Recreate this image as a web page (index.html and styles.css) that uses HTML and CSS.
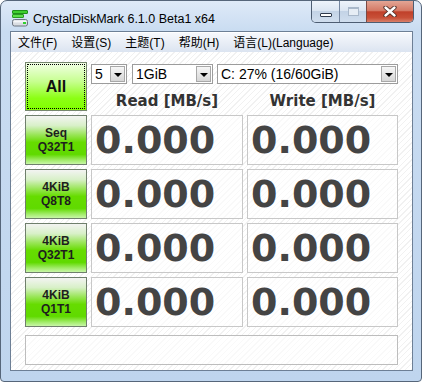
FILE: index.html
```html
<!DOCTYPE html>
<html>
<head>
<meta charset="utf-8">
<link rel="stylesheet" href="styles.css">
</head>
<body>
<div class="window">
  <div class="titlebar">
    <svg class="app-icon" width="16" height="17" viewBox="0 0 16 17">
      <rect x="0.5" y="0.5" width="15" height="3" rx="0.5" fill="#3fcf2f" stroke="#1f8f1a" stroke-width="1"/>
      <rect x="0.5" y="4.5" width="11" height="3" rx="0.5" fill="#5be04a" stroke="#2a9a22" stroke-width="1"/>
      <rect x="0.5" y="9.5" width="15" height="6.5" rx="2" fill="#d9dde2" stroke="#6b7480" stroke-width="1"/>
      <rect x="1.5" y="10.5" width="13" height="2" rx="1" fill="#f4f6f8"/>
      <rect x="11" y="12" width="3" height="2" fill="#2fd02f"/>
    </svg>
    <span class="title">CrystalDiskMark 6.1.0 Beta1 x64</span>
    <div class="caption">
      <div class="cbtn min"><span class="min-glyph"></span></div>
      <div class="cbtn max"><span class="max-glyph"></span></div>
      <div class="cbtn close">
        <svg width="14" height="11" viewBox="0 0 14 11">
          <path d="M2.5 1.5 L11.5 9.5 M11.5 1.5 L2.5 9.5" stroke="#4a2a24" stroke-width="4.2" stroke-linecap="round"/>
          <path d="M2.5 1.5 L11.5 9.5 M11.5 1.5 L2.5 9.5" stroke="#ffffff" stroke-width="2.4" stroke-linecap="round"/>
        </svg>
      </div>
    </div>
  </div>
  <div class="client">
    <div class="menubar">
      <span class="menu-item">文件(F)</span>
      <span class="menu-item">设置(S)</span>
      <span class="menu-item">主题(T)</span>
      <span class="menu-item">帮助(H)</span>
      <span class="menu-item">语言(L)(Language)</span>
    </div>
    <div class="content">
      <div class="grid">
        <div class="all-btn"><span class="focus">All</span></div>
        <div class="top-right">
          <div class="combos">
            <div class="combo w-count"><span class="combo-text">5</span><span class="drop"><span class="tri"></span></span></div>
            <div class="combo w-size"><span class="combo-text">1GiB</span><span class="drop"><span class="tri"></span></span></div>
            <div class="combo w-drive"><span class="combo-text">C: 27% (16/60GiB)</span><span class="drop"><span class="tri"></span></span></div>
          </div>
          <div class="headers">
            <div class="head read">Read [MB/s]</div>
            <div class="head write">Write [MB/s]</div>
          </div>
        </div>

        <div class="test-btn"><span>Seq</span><span>Q32T1</span></div>
        <div class="cell">0.000</div>
        <div class="cell">0.000</div>

        <div class="test-btn"><span>4KiB</span><span>Q8T8</span></div>
        <div class="cell">0.000</div>
        <div class="cell">0.000</div>

        <div class="test-btn"><span>4KiB</span><span>Q32T1</span></div>
        <div class="cell">0.000</div>
        <div class="cell">0.000</div>

        <div class="test-btn"><span>4KiB</span><span>Q1T1</span></div>
        <div class="cell">0.000</div>
        <div class="cell">0.000</div>
      </div>
      <div class="status"></div>
    </div>
  </div>
</div>
</body>
</html>
```

FILE: styles.css
```css
html, body {
  margin: 0;
  padding: 0;
  background: #ffffff;
}

.window {
  box-sizing: border-box;
  width: 422px;
  height: 382px;
  border: 1px solid #56667a;
  border-radius: 7px 7px 4px 4px;
  background: linear-gradient(180deg, #dfeaf8 0px, #c9dcf1 30px, #bfd5ee 100%);
  padding: 0 8px 10px 9px;
  display: flex;
  flex-direction: column;
  font-family: "Liberation Sans", "Noto Sans CJK SC", sans-serif;
}

.titlebar {
  height: 30px;
  display: flex;
  align-items: flex-start;
  padding-left: 2px;
  flex: none;
}

.app-icon {
  margin-top: 9px;
  flex: none;
}

.title {
  margin-top: 11px;
  margin-left: 5px;
  font-size: 12.5px;
  line-height: 15px;
  color: #000;
}

.caption {
  margin-left: auto;
  margin-right: -1px;
  display: flex;
  height: 21px;
  border: 1px solid #4d5d72;
  border-top: none;
  border-radius: 0 0 5px 5px;
  overflow: hidden;
}

.cbtn {
  display: flex;
  align-items: center;
  justify-content: center;
  height: 21px;
}

.cbtn.min {
  width: 27px;
  border-right: 1px solid #7486a0;
  background: linear-gradient(180deg, #eef4fb 0%, #dce6f2 45%, #c3d3e6 50%, #d0deee 100%);
}

.cbtn.max {
  width: 26px;
  border-right: 1px solid #7a4a44;
  background: linear-gradient(180deg, #eef4fb 0%, #dce6f2 45%, #c3d3e6 50%, #d0deee 100%);
}

.cbtn.close {
  width: 46px;
  background: linear-gradient(180deg, #e3a595 0%, #d47a66 45%, #c0402a 52%, #c85038 80%, #d9806a 100%);
}

.min-glyph {
  display: block;
  width: 10px;
  height: 2px;
  margin-top: 6px;
  background: #ffffff;
  border: 1px solid #2e3a4c;
  border-radius: 1px;
}

.max-glyph {
  display: block;
  box-sizing: border-box;
  width: 11px;
  height: 9px;
  border: 1px solid #a9b8ca;
  border-top-width: 2px;
  background: #e6edf5;
}

.client {
  flex: 1;
  display: flex;
  flex-direction: column;
  border: 1px solid #6d7f95;
  background: #ffffff;
}

.menubar {
  height: 20px;
  flex: none;
  display: flex;
  align-items: center;
  background: linear-gradient(180deg, #f6f8fc 0%, #e9eef6 50%, #dbe4f1 100%);
  border-top: 1px solid #ffffff;
  box-sizing: border-box;
}

.menu-item {
  padding: 0 7px;
  font-size: 12px;
  line-height: 16px;
  color: #000;
  font-family: "Liberation Sans", "Noto Sans CJK SC", sans-serif;
}

.content {
  flex: 1;
  padding: 10px 14px 0 14px;
  background: repeating-linear-gradient(135deg, #ffffff 0px, #ffffff 3px, #f1f1f1 3px, #f1f1f1 4px);
}

.grid {
  display: grid;
  grid-template-columns: 62px 152px 151px;
  grid-template-rows: 49px repeat(4, 50px);
  column-gap: 4px;
  row-gap: 4px;
}

.all-btn {
  box-sizing: border-box;
  border: 1px solid #76866e;
  background: linear-gradient(180deg, #f2ffe6 0%, #c6ff8e 40%, #8cff14 75%, #80ff00 100%);
  padding: 1px;
  display: flex;
}

.all-btn .focus {
  flex: 1;
  display: flex;
  align-items: center;
  justify-content: center;
  border: 1px dotted #000;
  font-weight: bold;
  font-size: 16px;
  color: #111;
}

.top-right {
  grid-column: 2 / 4;
  display: flex;
  flex-direction: column;
}

.combos {
  margin-top: 2px;
  height: 20px;
  display: flex;
}

.combo {
  box-sizing: border-box;
  height: 20px;
  border: 1px solid #9c9c9c;
  background: #ffffff;
  display: flex;
  align-items: center;
  font-size: 14px;
  color: #000;
}

.w-count { width: 36px; margin-right: 5px; }
.w-size { width: 81px; margin-right: 4px; }
.w-drive { width: 181px; }

.combo-text {
  flex: 1;
  padding-left: 3px;
  white-space: nowrap;
  overflow: hidden;
  line-height: 16px;
}

.drop {
  box-sizing: border-box;
  width: 15px;
  height: 16px;
  margin-right: 1px;
  border: 1px solid #a8a8a8;
  background: linear-gradient(180deg, #f6f6f6 0%, #e6e6e6 50%, #d6d6d6 100%);
  display: flex;
  align-items: center;
  justify-content: center;
}

.tri {
  width: 0;
  height: 0;
  border-left: 4px solid transparent;
  border-right: 4px solid transparent;
  border-top: 4px solid #000;
  margin-top: 1px;
}

.headers {
  margin-top: 8px;
  display: flex;
  column-gap: 4px;
}

.head {
  text-align: center;
  font-family: "DejaVu Sans", sans-serif;
  font-weight: bold;
  font-size: 15px;
  line-height: 18px;
  color: #333;
}

.head.read { width: 152px; }
.head.write { width: 151px; }

.test-btn {
  box-sizing: border-box;
  border: 1px solid #6f7f6c;
  background: linear-gradient(180deg, #f3f4f2 0%, #d8f0c8 20%, #96e552 40%, #66dc00 55%, #60da00 80%, #a2ec6a 92%, #c8f6a8 100%);
  display: flex;
  flex-direction: column;
  align-items: center;
  justify-content: center;
  font-weight: bold;
  font-size: 12px;
  line-height: 14px;
  color: #1e1e1e;
}

.cell {
  box-sizing: border-box;
  border: 1px solid #c8c8c8;
  background: rgba(255, 255, 255, 0.55);
  display: flex;
  align-items: center;
  padding-left: 3px;
  font-family: "DejaVu Sans", sans-serif;
  font-weight: bold;
  font-size: 38px;
  line-height: 1;
  color: #444;
}

.status {
  box-sizing: border-box;
  margin-top: 8px;
  width: 373px;
  height: 30px;
  border: 1px solid #bdbdbd;
  background: rgba(255, 255, 255, 0.6);
}
```
